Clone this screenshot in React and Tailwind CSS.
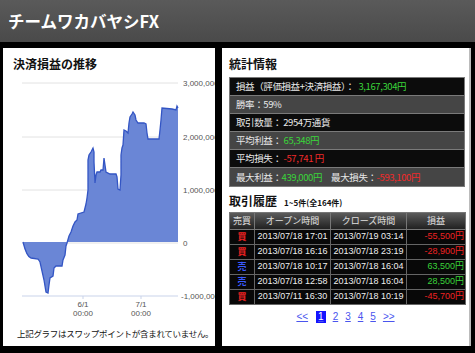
const jp = { fontFamily: '"Noto Sans CJK JP", "Noto Sans", sans-serif' }
const ar = 'Liberation Sans, Arial, sans-serif'

const series =
  'M23,242 C25,250 27,257 31,258 L38,259 L40,262 L44,280 L46,292 L48,293 L49,285 L50,278 L53,276 L54,268 L56,266 L62,266 L63,260 L65,255 L66,246 L67,243 L69,236 L71,232 L73,226 L75,222 L77,220 L78,214 L84,212 L86,204 L87,198 L88,190 L88,160 L89,155 L91,152 L93,148 L94,152 L94,162 L95,183 L96,175 L97,172 L100,172 L101,170 L103,170 L104,158 L105,165 L106,172 L110,174 L116,174 L117,177 L118,189 L120,190 L121,175 L121,155 L122,148 L123,145 L124,130 L126,131 L128,133 L129,123 L130,117 L132,114 L133,112 L135,115 L136,120 L138,123 L144,123 L146,124 L147,133 L148,139 L159,139 L160,130 L161,120 L162,108 L172,109 L176,110 L177,106 L178,108'

function Chart() {
  const grid = [
    { y: 83, label: '3,000,000' },
    { y: 137, label: '2,000,000' },
    { y: 190, label: '1,000,000' },
    { y: 243, label: '0' },
    { y: 296, label: '-1,000,000' },
  ]
  return (
    <svg width="212" height="245" viewBox="3 75 212 245" className="block">
      {grid.map(g => (
        <g key={g.y}>
          <line x1="22" x2="178" y1={g.y} y2={g.y} stroke={g.y === 296 ? '#c9d3ea' : '#e2e2e2'} strokeWidth="1" />
          <text x={g.label.startsWith('-') ? 181 : 183} y={g.y + 3} fontSize="8" fill="#555" fontFamily={ar}>{g.label}</text>
        </g>
      ))}
      <path d={series + ' L178,242 L23,242 Z'} fill="#6a86d6" />
      <path d={series} fill="none" stroke="#3355c4" strokeWidth="1.3" />
      {[{ x: 83, d: '6/1' }, { x: 141, d: '7/1' }].map(t => (
        <g key={t.x}>
          <line x1={t.x} x2={t.x} y1="296" y2="299" stroke="#c9d3ea" />
          <text x={t.x} y="307" fontSize="8" fill="#555" textAnchor="middle" fontFamily={ar}>{t.d}</text>
          <text x={t.x} y="316" fontSize="8" fill="#555" textAnchor="middle" fontFamily={ar}>00:00</text>
        </g>
      ))}
    </svg>
  )
}

function StatRow({ dark, children, h = 'h-[18px]' }) {
  return (
    <div className={`${h} flex items-center px-[6px] border-t border-[#7a7a7a] text-[9.5px] tracking-[-0.4px] whitespace-nowrap text-[#e8e8e8] ${dark ? 'bg-[#0c0c0c]' : 'bg-[#454545]'}`}>
      {children}
    </div>
  )
}

const trades = [
  { side: '買', open: '2013/07/18 17:01', close: '2013/07/19 03:14', pl: '-55,500円' },
  { side: '買', open: '2013/07/18 16:16', close: '2013/07/18 23:19', pl: '-28,900円' },
  { side: '売', open: '2013/07/18 10:17', close: '2013/07/18 16:04', pl: '63,500円' },
  { side: '売', open: '2013/07/18 12:58', close: '2013/07/18 16:04', pl: '28,500円' },
  { side: '買', open: '2013/07/11 16:30', close: '2013/07/18 10:19', pl: '-45,700円' },
]

export default function App() {
  return (
    <div className="w-[475px] h-[353px] bg-black overflow-hidden" style={jp}>
      <div className="h-[42px] bg-gradient-to-b from-[#5a5a5a] to-[#4a4a4a] flex items-center px-[8px]">
        <h1 className="text-[16.5px] font-bold text-white">チームワカバヤシFX</h1>
      </div>

      <div className="flex gap-[7px] pl-[3px] pt-[6px]">
        <div className="w-[212px] h-[298px] bg-white overflow-hidden flex flex-col">
          <div className="h-[27px] flex items-center px-[10px] pt-[4px] text-[12px] font-bold text-[#111]">決済損益の推移</div>
          <Chart />
          <div className="flex-1 flex items-center pl-[14px] text-[#111]">
            <span className="text-[8.5px] tracking-[-0.3px] whitespace-nowrap">上記グラフはスワップポイントが含まれていません。</span>
          </div>
        </div>

        <div className="w-[249px] h-[298px] bg-white border-r-[2px] border-[#bbb] flex flex-col px-[7px]">
          <div className="h-[29px] flex items-center pt-[3px] text-[12px] font-bold text-[#111]">統計情報</div>
          <div className="w-[236px] border-b border-[#7a7a7a] border-x border-x-[#7a7a7a]">
            <StatRow dark>損益（評価損益+決済損益）：<span className="ml-[4px] text-[#3ad43a]">3,167,304円</span></StatRow>
            <StatRow>勝率：59%</StatRow>
            <StatRow dark>取引数量： 2954万通貨</StatRow>
            <StatRow>平均利益：<span className="ml-[2px] text-[#3ad43a]">65,348円</span></StatRow>
            <StatRow dark>平均損失：<span className="ml-[2px] text-[#f02a2a]">-57,741 円</span></StatRow>
            <StatRow h="h-[19px]">
              最大利益：<span className="text-[#3ad43a]">439,000円</span>
              <span className="ml-[9px]">最大損失：</span><span className="text-[#f02a2a]">-593,100円</span>
            </StatRow>
          </div>

          <div className="h-[24px] flex items-end pb-[1px] gap-[7px]">
            <span className="text-[12px] font-bold text-[#111]">取引履歴</span>
            <span className="text-[8px] font-bold text-[#111] mb-[1px]">1~5件(全164件)</span>
          </div>

          <table className="w-[236px] border-collapse text-[9px] text-[#eee] table-fixed mt-[1px]" style={{ fontFamily: `${ar}, "Noto Sans CJK JP"` }}>
            <colgroup>
              <col className="w-[25px]" />
              <col className="w-[76px]" />
              <col className="w-[76px]" />
              <col className="w-[59px]" />
            </colgroup>
            <thead>
              <tr className="h-[17px] bg-gradient-to-b from-[#5c5c5c] to-[#1e1e1e]">
                {['売買', 'オープン時間', 'クローズ時間', '損益'].map(h => (
                  <th key={h} className="border border-[#777] font-normal text-[#e0e0e0] text-center" style={jp}>{h}</th>
                ))}
              </tr>
            </thead>
            <tbody>
              {trades.map((t, i) => (
                <tr key={i} className="h-[15px] bg-[#080808]">
                  <td className={`border border-[#666] text-center font-bold text-[9px] ${t.side === '買' ? 'text-[#ee2222]' : 'text-[#3a5aff]'}`} style={jp}>{t.side}</td>
                  <td className="border border-[#666] text-center">{t.open}</td>
                  <td className="border border-[#666] text-center">{t.close}</td>
                  <td className={`border border-[#666] text-right pr-[1px] ${t.pl.startsWith('-') ? 'text-[#ee2222]' : 'text-[#3ad43a]'}`}>{t.pl}</td>
                </tr>
              ))}
            </tbody>
          </table>

          <div className="flex items-center justify-center gap-[7px] mt-[4px] text-[10px] text-[#4a55ee] underline" style={{ fontFamily: ar }}>
            <span>&lt;&lt;</span>
            <span className="bg-[#1414ff] text-white px-[2px] leading-[12px] ml-[1px]">1</span>
            <span>2</span>
            <span>3</span>
            <span>4</span>
            <span>5</span>
            <span>&gt;&gt;</span>
          </div>
        </div>
      </div>
    </div>
  )
}
